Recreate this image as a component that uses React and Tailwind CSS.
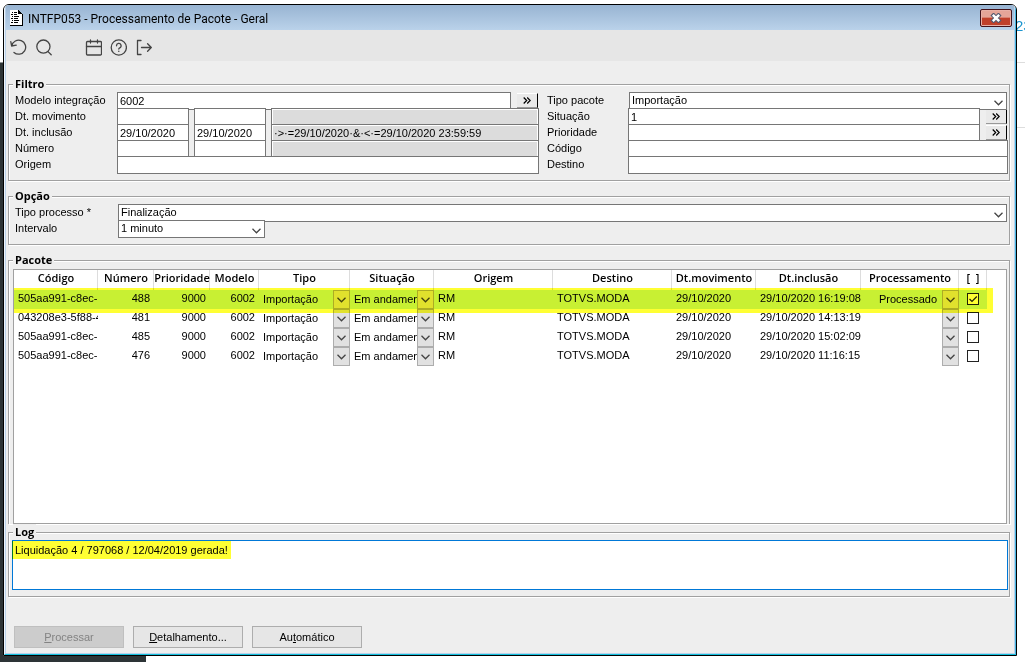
import { useState } from 'react';
import clsx from 'clsx';

const COLUMNS = [
  { label: 'Código', width: 'w-[84px]' },
  { label: 'Número', width: 'w-[56px]' },
  { label: 'Prioridade', width: 'w-[56px]' },
  { label: 'Modelo', width: 'w-[49px]' },
  { label: 'Tipo', width: 'w-[91px]' },
  { label: 'Situação', width: 'w-[84px]' },
  { label: 'Origem', width: 'w-[119px]' },
  { label: 'Destino', width: 'w-[119px]' },
  { label: 'Dt.movimento', width: 'w-[84px]' },
  { label: 'Dt.inclusão', width: 'w-[105px]' },
  { label: 'Processamento', width: 'w-[98px]' },
  { label: '[  ]', width: 'w-[28px]' },
];

const PACKAGES = [
  { codigo: '505aa991-c8ec-', numero: 488, inclusao: '29/10/2020 16:19:08', status: 'Processado' },
  { codigo: '043208e3-5f88-4', numero: 481, inclusao: '29/10/2020 14:13:19', status: '' },
  { codigo: '505aa991-c8ec-', numero: 485, inclusao: '29/10/2020 15:02:09', status: '' },
  { codigo: '505aa991-c8ec-', numero: 476, inclusao: '29/10/2020 11:16:15', status: '' },
];

const Chevron = ({ className }) => (
  <svg viewBox="0 0 9 6" className={clsx('pointer-events-none h-[6px] w-[9px]', className)} fill="none" stroke="#444" strokeWidth="1.3">
    <path d="M.5.8l4 4 4-4" />
  </svg>
);

const DocIcon = () => (
  <svg viewBox="0 0 13 16" className="h-4 w-[13px]" shapeRendering="crispEdges">
    <path d="M0 0h9v1h1v1h1v1h1v1h1v12H0z" fill="#000" />
    <path d="M0 0h8v4h4v11H0z" fill="#fff" />
    <path d="M2 2h1v1H2zM4 2h3v1H4zM1 4h2v1H1zM4 4h3v1H4zM2 6h1v1H2zM4 6h5v1H4zM1 8h2v1H1zM4 8h4v1H4zM2 10h1v1H2zM4 10h5v1H4zM1 12h2v1H1zM4 12h4v1H4z" fill="#000" />
  </svg>
);

const ToolButton = ({ label, children }) => (
  <button aria-label={label} className="size-[17px]">
    <svg viewBox="0 0 17 17" className="size-[17px]" fill="none" stroke="#444" strokeWidth="1.3" strokeLinecap="round" strokeLinejoin="round">
      {children}
    </svg>
  </button>
);

const Group = ({ title, className, children }) => (
  <fieldset className={clsx('min-w-0 border border-[#a0a0a0] shadow-[1px_1px_0_#fff,inset_1px_1px_0_#fff]', className)}>
    <legend className="ml-1 bg-[#eee] px-0.5 font-['Open_Sans',sans-serif] text-[11px] leading-4 font-bold">{title}</legend>
    {children}
  </fieldset>
);

// every line is 16px tall, its box is 18px and runs under the next one
const Row = ({ id, label, labelWidth = 'w-[102px]', children }) => (
  <div className="flex h-4">
    <label htmlFor={id} className={clsx('shrink-0 leading-4', labelWidth)}>{label}</label>
    <div className="flex h-[18px] min-w-0 flex-1">{children}</div>
  </div>
);

const Field = ({ className = 'flex-1', ...props }) => (
  <input className={clsx('relative h-[18px] min-w-0 border border-[#767676] bg-white px-0.5', className)} {...props} />
);

const Readonly = ({ value, ...props }) => (
  <input
    readOnly
    defaultValue={value}
    className="relative h-[18px] min-w-0 flex-1 border border-[#767676] bg-[#dcdcdc] px-0.5 shadow-[inset_1px_1px_0_#fff,inset_-1px_0_0_#fff]"
    {...props}
  />
);

const Select = ({ id, options, className = 'flex-1' }) => (
  <div className={clsx('relative h-[18px]', className)}>
    <select id={id} className="block h-[18px] w-full appearance-none border border-[#767676] bg-white pr-5 pb-[3px] pl-0.5 leading-3">
      {options.map(o => <option key={o}>{o}</option>)}
    </select>
    <Chevron className="absolute right-1 bottom-1" />
  </div>
);

const MoreButton = ({ label }) => (
  <button aria-label={label} className="mt-px flex h-[15px] w-[21px] shrink-0 items-center justify-center border-t border-r border-b border-t-white border-r-black border-b-[#999] bg-[#e9e9e9]">
    <svg viewBox="0 0 8 7" className="h-[7px] w-2" fill="none" stroke="#000" strokeWidth="1.2">
      <path d="M.7.5l3 3-3 3M4.2.5l3 3-3 3" />
    </svg>
  </button>
);

const CellSelect = ({ label, value, className = 'pr-4 pl-1' }) => (
  <div className="relative h-[19px]">
    <select aria-label={label} defaultValue={value} className={clsx('block h-[19px] w-full appearance-none bg-transparent pb-px leading-4', className)}>
      <option>{value}</option>
    </select>
    <span className="pointer-events-none absolute inset-y-0 right-0 flex w-[17px] items-center justify-center border border-[#adadad] bg-[#e1e1e1]">
      <Chevron />
    </span>
  </div>
);

const PackageTable = () => {
  const [checked, setChecked] = useState([488]);

  const toggle = (numero) => {
    setChecked(checked.includes(numero) ? checked.filter(n => n !== numero) : [...checked, numero]);
  };

  return (
    <div className="relative mt-px mr-0.5 ml-1 flex-1 overflow-hidden border border-[#a0a0a0] bg-white">
      <table className="w-[973px] table-fixed border-collapse">
        <thead>
          <tr className="h-5">
            {COLUMNS.map(c => (
              <th key={c.label} className={clsx('p-0 text-center align-top font-[\'Open_Sans\',sans-serif] text-[11px] leading-4 font-semibold whitespace-pre shadow-[inset_-1px_0_0_#ddd]', c.width)}>
                {c.label}
              </th>
            ))}
          </tr>
        </thead>
        <tbody>
          {PACKAGES.map((p, i) => (
            <tr key={p.numero} className={clsx('h-[19px] align-top leading-4 whitespace-nowrap', i === 0 && 'bg-[#c8f0ff]')}>
              <td className="overflow-hidden p-0 pl-1">{p.codigo}</td>
              <td className="p-0 pr-1 text-right">{p.numero}</td>
              <td className="p-0 pr-1 text-right">9000</td>
              <td className="p-0 pr-1 text-right">6002</td>
              <td className="p-0"><CellSelect label="Tipo" value="Importação" /></td>
              <td className="p-0"><CellSelect label="Situação" value="Em andamento" /></td>
              <td className="p-0 pl-1">RM</td>
              <td className="p-0 pl-1">TOTVS.MODA</td>
              <td className="p-0 pl-1">29/10/2020</td>
              <td className="p-0 pl-1">{p.inclusao}</td>
              <td className="p-0"><CellSelect label="Processamento" value={p.status} className="pr-[22px] pl-[18px]" /></td>
              <td className="p-0 pt-[3px]">
                <label className="relative mx-auto block size-3">
                  <input
                    type="checkbox"
                    aria-label={`Pacote ${p.numero}`}
                    checked={checked.includes(p.numero)}
                    onChange={() => toggle(p.numero)}
                    className="peer block size-3 appearance-none border border-[#222] bg-white"
                  />
                  <svg viewBox="0 0 12 12" className="pointer-events-none absolute inset-0 hidden size-3 peer-checked:block" fill="none" stroke="#222" strokeWidth="1.2">
                    <path d="M2.5 6 5 8.5 9.8 3.5" />
                  </svg>
                </label>
              </td>
            </tr>
          ))}
        </tbody>
      </table>
      {/* marker stroke over the first package */}
      <div className="pointer-events-none absolute top-[18px] left-0 h-[25px] w-[979px] bg-[#ffff33] mix-blend-multiply" />
    </div>
  );
};

const TitleBar = () => (
  <header className="flex h-[25px] shrink-0 items-center bg-linear-to-b from-[#98b4d2] to-[#bad2ea] pr-0.5 pl-1">
    <DocIcon />
    <h1 className="ml-[5px] flex-1 pt-0.5 font-['Roboto',sans-serif] text-[12px] leading-4">INTFP053 - Processamento de Pacote - Geral</h1>
    <button aria-label="Fechar" className="flex h-[18px] w-8 items-center justify-center rounded-[2px] border border-[#43131b] bg-linear-to-b from-[#e5a598] from-45% to-[#c0402a] to-50% shadow-[inset_0_0_0_1px_#e8b0a6]">
      <svg viewBox="0 0 12 10" className="h-[10px] w-3">
        <path d="M2 1l8 8M10 1l-8 8" stroke="#555a70" strokeWidth="4.4" />
        <path d="M2.8 1.8l6.4 6.4M9.2 1.8l-6.4 6.4" stroke="#fff" strokeWidth="2.4" />
      </svg>
    </button>
  </header>
);

const Toolbar = () => (
  <nav className="flex h-[31px] shrink-0 items-center gap-2 bg-[#e6e6e6] pt-[3px] pl-1">
    <ToolButton label="Limpar">
      <path d="M.8 2.6 1.6 7l4.6-.8M1.8 6.8A7 7 0 1 1 4 13.4" />
    </ToolButton>
    <ToolButton label="Pesquisar">
      <circle cx="8.4" cy="7.6" r="6.6" />
      <path d="m13 12.6 3.2 3.2" />
    </ToolButton>
    <div className="w-[17px]" />
    <ToolButton label="Agenda">
      <rect x="1.5" y="2.5" width="15" height="13.5" rx="1" />
      <path d="M1.5 7.5h15M5.5 1v3M12.5 1v3" />
    </ToolButton>
    <ToolButton label="Ajuda">
      <circle cx="8.8" cy="8.5" r="7.6" />
      <path d="M6.5 6.8a2.3 2.3 0 1 1 3.3 2c-.8.4-1 .7-1 1.3M8.8 12.2v.2" />
    </ToolButton>
    <ToolButton label="Sair">
      <path d="M6 1.5H2.5v14H6M6.5 8.5h9.8M12.6 4.8l3.7 3.7-3.7 3.7" />
    </ToolButton>
  </nav>
);

const ActionButton = ({ disabled, children }) => (
  <button
    disabled={disabled}
    className="h-[22px] w-[110px] border border-[#adadad] bg-[#e6e6e6] leading-4 disabled:border-[#bfbfbf] disabled:bg-[#ccc] disabled:text-[#838383]"
  >
    {children}
  </button>
);

const App = () => (
  <div className="flex h-screen min-h-[480px] flex-col overflow-hidden bg-white font-['Liberation_Sans',Arial,sans-serif] text-[11px] text-black">
    <div className="flex min-h-0 flex-1">
      <div className="w-[3px] shrink-0 bg-linear-to-b from-white from-[62px] to-[#2d3436] to-[63px]" />

      <main className="mt-1 flex min-w-0 flex-1 flex-col overflow-hidden rounded-t-[6px] border border-black">
        <div className="flex min-h-0 flex-1 flex-col border-r border-b border-l border-r-[#45b4e0] border-b-[#12bfdc] border-l-[#eef4fa]">
          <div className="flex min-h-0 flex-1 flex-col border-r border-b border-l border-[#b9d1ea] bg-[#eee]">
            <TitleBar />
            <Toolbar />

            <div className="flex min-h-0 flex-1 flex-col pt-[15px] pr-1 pl-0.5">
              <Group title="Filtro" className="mb-[7px]">
                <div className="grid grid-cols-[524fr_461fr] gap-2 pr-px pb-2 pl-1.5">
                  <div>
                    <Row id="modelo" label="Modelo integração">
                      <Field id="modelo" defaultValue="6002" />
                      <div className="w-1.5" />
                      <MoreButton label="Buscar modelo" />
                      <div className="w-px" />
                    </Row>
                    <Row id="movimento" label="Dt. movimento">
                      <div className="flex min-w-0 flex-1 gap-[5px]">
                        <Field id="movimento" className="w-[72px]" />
                        <Field aria-label="Dt. movimento final" className="w-[72px]" />
                        <Readonly aria-label="Expressão movimento" />
                      </div>
                    </Row>
                    <Row id="inclusao" label="Dt. inclusão">
                      <div className="flex min-w-0 flex-1 gap-[5px]">
                        <Field id="inclusao" defaultValue="29/10/2020" className="w-[72px]" />
                        <Field aria-label="Dt. inclusão final" defaultValue="29/10/2020" className="w-[72px]" />
                        <Readonly aria-label="Expressão inclusão" value="·>·=29/10/2020·&·<·=29/10/2020 23:59:59" />
                      </div>
                    </Row>
                    <Row id="numero" label="Número">
                      <div className="flex min-w-0 flex-1 gap-[5px]">
                        <Field id="numero" className="w-[72px]" />
                        <Field aria-label="Número final" className="w-[72px]" />
                        <Readonly aria-label="Expressão número" />
                      </div>
                    </Row>
                    <Row id="origem" label="Origem">
                      <Field id="origem" />
                    </Row>
                  </div>

                  <div>
                    <Row id="tipo" label="Tipo pacote" labelWidth="w-[82px]">
                      <Select id="tipo" options={['Importação', 'Exportação']} className="mr-px flex-1" />
                    </Row>
                    <Row id="situacao" label="Situação" labelWidth="w-[81px]">
                      <Field id="situacao" defaultValue="1" />
                      <div className="w-1.5" />
                      <MoreButton label="Buscar situação" />
                      <div className="w-px" />
                    </Row>
                    <Row id="prioridade" label="Prioridade" labelWidth="w-[81px]">
                      <Field id="prioridade" />
                      <div className="w-1.5" />
                      <MoreButton label="Buscar prioridade" />
                      <div className="w-px" />
                    </Row>
                    <Row id="codigo" label="Código" labelWidth="w-[81px]">
                      <Field id="codigo" />
                    </Row>
                    <Row id="destino" label="Destino" labelWidth="w-[81px]">
                      <Field id="destino" />
                    </Row>
                  </div>
                </div>
              </Group>

              <Group title="Opção" className="mb-[7px]">
                <div className="pr-0.5 pb-2 pl-1.5">
                  <Row id="processo" label="Tipo processo *" labelWidth="w-[103px]">
                    <Select id="processo" options={['Finalização']} />
                  </Row>
                  <Row id="intervalo" label="Intervalo" labelWidth="w-[103px]">
                    <Select id="intervalo" options={['1 minuto', '5 minutos']} className="w-[147px]" />
                  </Row>
                </div>
              </Group>

              <Group title="Pacote" className="flex min-h-0 flex-1 flex-col border-b-0">
                <PackageTable />
              </Group>

              <Group title="Log">
                <div className="relative mb-1.5 pr-px pl-[3px]">
                  <textarea
                    aria-label="Log"
                    defaultValue="Liquidação 4 / 797068 / 12/04/2019 gerada!"
                    className="block h-[50px] w-full resize-none border border-[#0078d7] bg-white px-0.5 py-px leading-4"
                  />
                  <div className="pointer-events-none absolute top-px left-[3px] h-[18px] w-[219px] bg-[#ffff33] mix-blend-multiply" />
                </div>
              </Group>

              <div className="flex shrink-0 gap-[9px] pt-[29px] pb-[5px] pl-1.5">
                <ActionButton disabled><u>P</u>rocessar</ActionButton>
                <ActionButton><u>D</u>etalhamento...</ActionButton>
                <ActionButton>Au<u>t</u>omático</ActionButton>
              </div>
            </div>
          </div>
        </div>
      </main>

      {/* page that shows behind the window */}
      <aside className="w-2 shrink-0 overflow-hidden">
        <div className="-ml-0.5 h-[63px] border-b border-[#ddd] pt-4 text-[15px] leading-5 text-[#1b95cf]">23</div>
        <div className="h-[65px] border-b border-[#ddd]" />
      </aside>
    </div>
    <div className="h-1.5 w-[146px] shrink-0 bg-[#2d3436]" />
  </div>
);

export default App;
